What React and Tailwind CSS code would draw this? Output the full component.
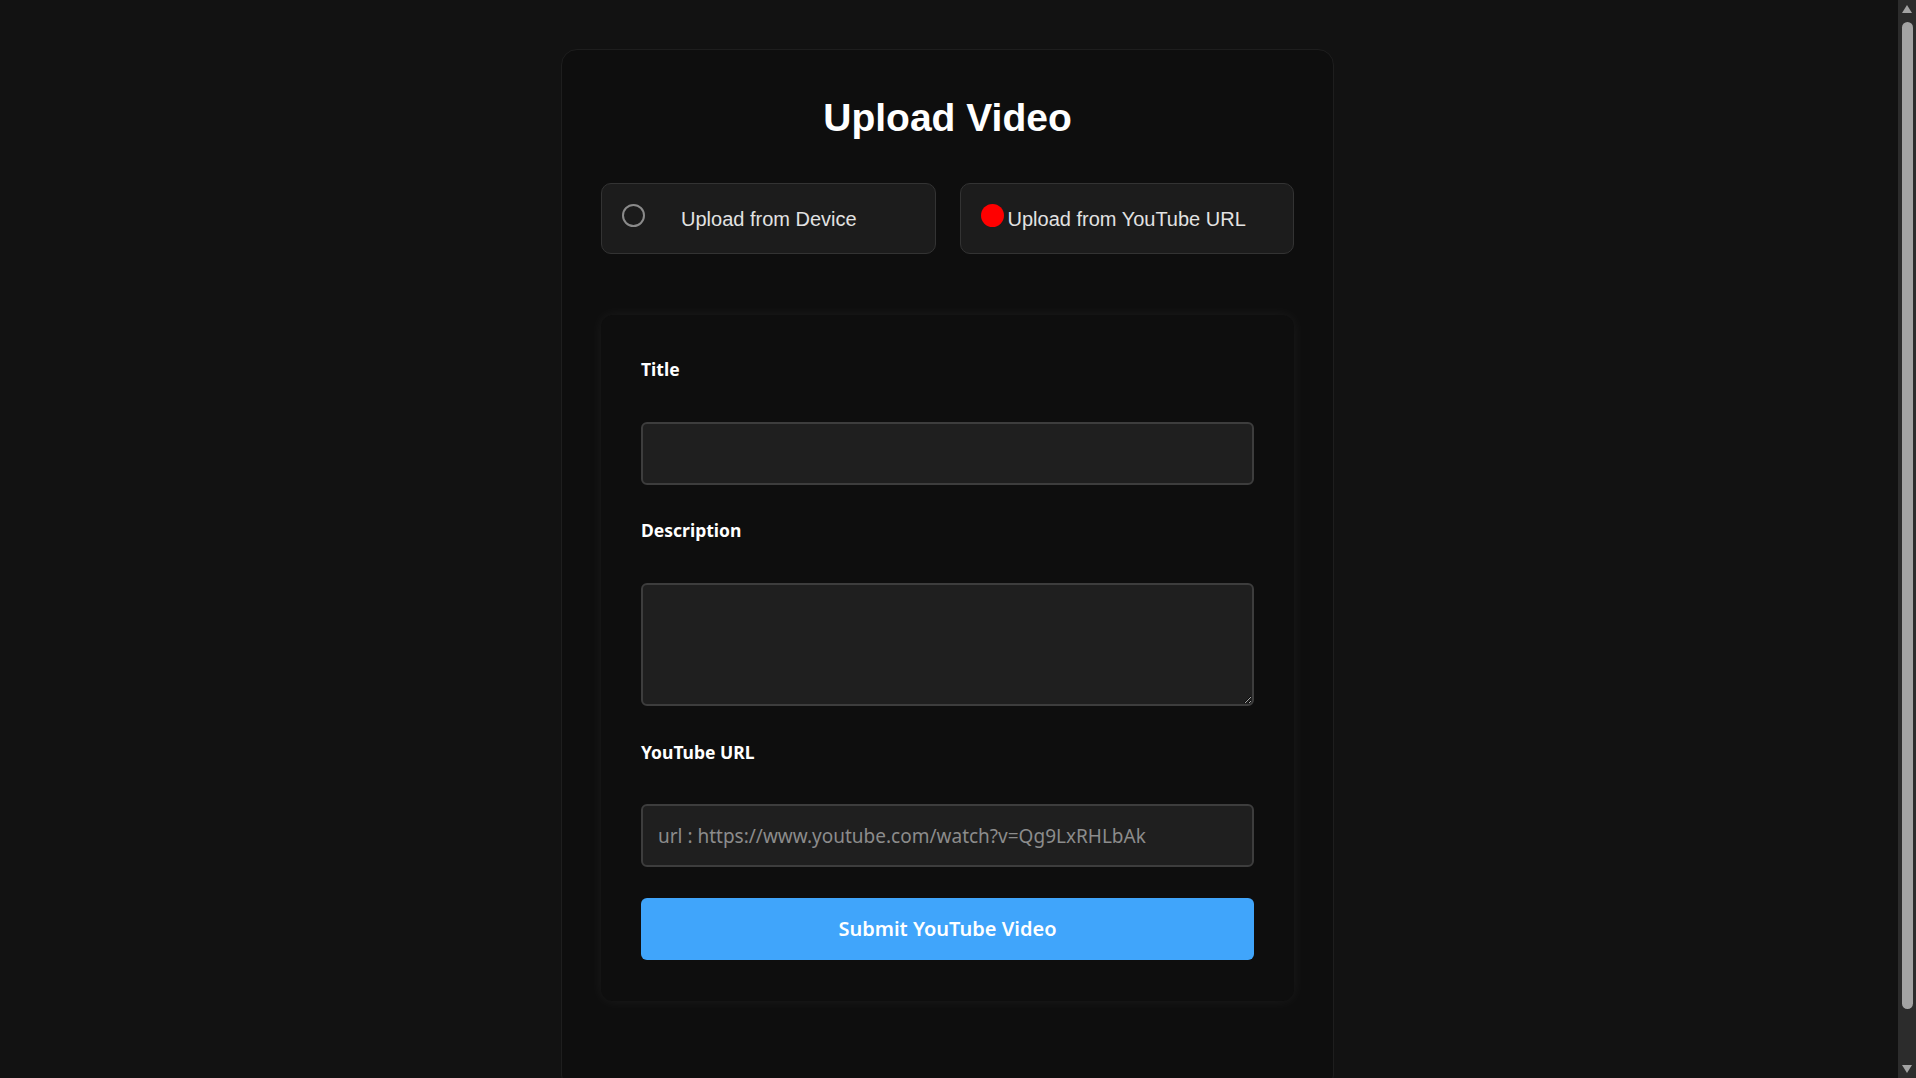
import React, { useState } from 'react';

const sans = "font-['Liberation_Sans',Arial,sans-serif]";
const ui = "font-['Noto_Sans','Open_Sans',sans-serif]";

const SourceOption = ({ label, active, onClick, gap }) => (
    <button
        type="button"
        onClick={onClick}
        className={`flex h-[71px] items-center rounded-[10px] border border-[#333] bg-[#1c1c1c] pl-[20px] text-left ${sans}`}
    >
        {active ? (
            <span className="mb-[6px] h-[23px] w-[23px] shrink-0 rounded-full bg-[#ff0000]" />
        ) : (
            <span className="mb-[6px] h-[23px] w-[23px] shrink-0 rounded-full border-2 border-[#8a8a8a] bg-[#1b1b1b]" />
        )}
        <span className={`${gap} text-[20px] text-[#e2e2e2]`}>{label}</span>
    </button>
);

// fake window scrollbar, the sandbox browser hides native ones
const Scrollbar = () => (
    <div className="flex h-screen w-[18px] shrink-0 flex-col items-center bg-[#2c2c2c]">
        <svg width="12" height="10" viewBox="0 0 12 10" className="mt-[4px]">
            <polygon points="6,1 11,9 1,9" fill="#a3a3a3" />
        </svg>
        <div className="mt-[8px] h-[987px] w-[11px] rounded-full bg-[#a3a3a3]" />
        <div className="flex-1" />
        <svg width="12" height="10" viewBox="0 0 12 10" className="mb-[4px]">
            <polygon points="1,1 11,1 6,9" fill="#a3a3a3" />
        </svg>
    </div>
);

const App = () => {
    const [source, setSource] = useState('youtube');

    return (
        <div className="flex h-screen bg-[#121212] scheme-dark">
            <div className="h-screen flex-1 overflow-y-auto pt-[49px] pr-[3px] pb-[50px] [scrollbar-width:none]">
                <div className="mx-auto w-[773px] rounded-2xl border border-[#1e1e1e] bg-[#0e0e0e] px-[39px] pt-[45px] pb-[89px]">
                    <h1 className={`text-center text-[39px] leading-[45px] font-bold text-white ${sans}`}>
                        Upload Video
                    </h1>

                    {/* source picker */}
                    <div className="mt-[43px] grid grid-cols-2 gap-6">
                        <SourceOption
                            label="Upload from Device"
                            active={source === 'device'}
                            onClick={() => setSource('device')}
                            gap="ml-[36px]"
                        />
                        <SourceOption
                            label="Upload from YouTube URL"
                            active={source === 'youtube'}
                            onClick={() => setSource('youtube')}
                            gap="ml-[4px]"
                        />
                    </div>

                    <form
                        onSubmit={e => e.preventDefault()}
                        className={`mt-[61px] flex flex-col rounded-xl bg-[#0e0e0e] px-10 pt-[41px] pb-[41px] shadow-[0_0_14px_rgba(255,255,255,0.06)] ${ui}`}
                    >
                        <label className="h-[26px] text-[17.5px] leading-[26px] font-bold text-white">Title</label>
                        <input
                            type="text"
                            className="mt-10 h-[63px] rounded-md border-2 border-[#3d3d3d] bg-[#1f1f1f] px-[15px] text-[19px] text-white outline-none"
                        />

                        <label className="mt-8 h-[26px] text-[17.5px] leading-[26px] font-bold text-white">Description</label>
                        <textarea className="mt-10 h-[123px] rounded-md border-2 border-[#3d3d3d] bg-[#1f1f1f] px-[15px] py-3 text-[19px] text-white outline-none" />

                        <label className="mt-[33px] h-[26px] text-[17.5px] leading-[26px] font-bold text-white">YouTube URL</label>
                        <input
                            type="text"
                            placeholder="url : https://www.youtube.com/watch?v=Qg9LxRHLbAk"
                            className="mt-[39px] h-[63px] rounded-md border-2 border-[#3d3d3d] bg-[#1f1f1f] px-[15px] text-[19px] text-white outline-none placeholder:text-[#8c8c8c]"
                        />

                        <button
                            type="submit"
                            className="mt-[31px] h-[62px] rounded-md bg-[#40a5fb] text-[20px] font-semibold text-white"
                        >
                            Submit YouTube Video
                        </button>
                    </form>
                </div>
            </div>
            <Scrollbar />
        </div>
    );
};

export default App;
